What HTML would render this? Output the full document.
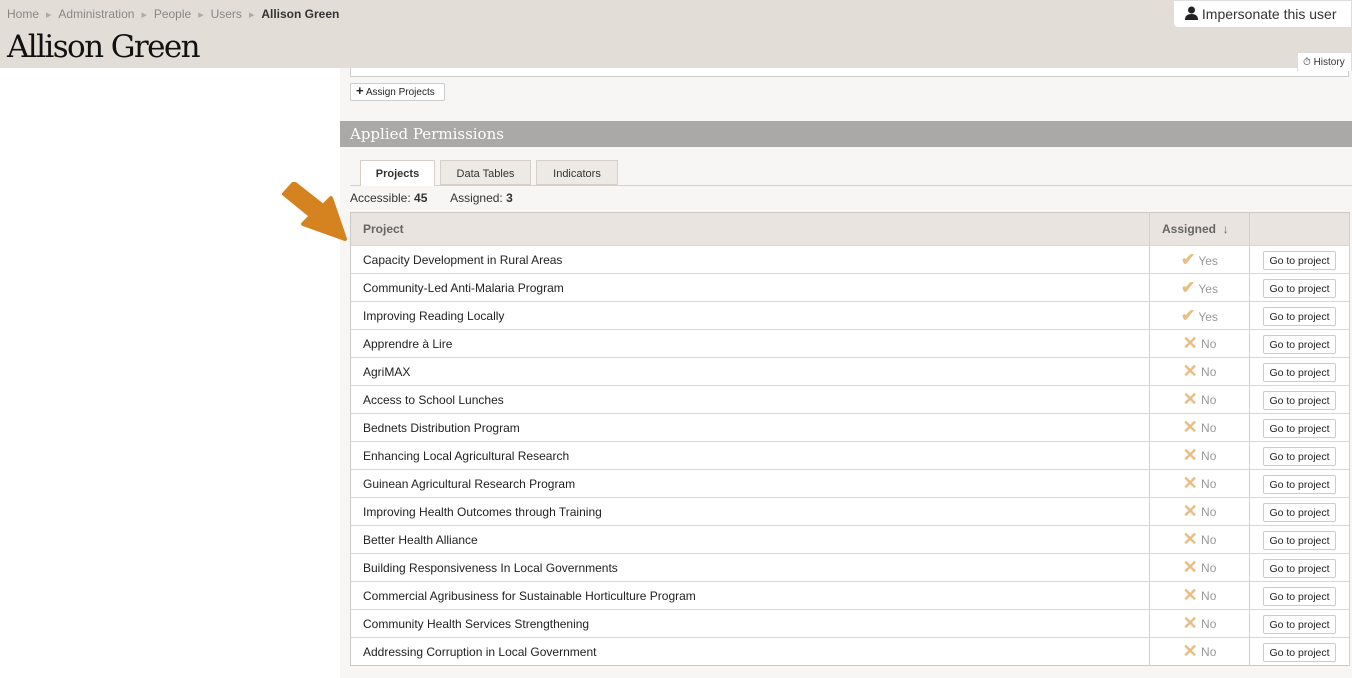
<!DOCTYPE html>
<html><head><meta charset="utf-8"><style>
*{box-sizing:border-box;margin:0;padding:0}
body{width:1352px;height:678px;overflow:hidden;background:#fff;font-family:"Liberation Sans",sans-serif;font-size:12px;color:#222;position:relative}
.hdr{position:absolute;left:0;top:0;width:1352px;height:68px;background:#e3ddd7;z-index:5}
.bc{position:absolute;left:7px;top:7px;font-size:12px;color:#888}
.bc span.s{display:inline-block;margin:0 7px;font-size:7px;color:#aaa;vertical-align:1px}
.bc b{color:#333}
h1{position:absolute;left:7px;top:29px;font-family:"DejaVu Serif","Liberation Serif",serif;font-weight:normal;font-size:31px;letter-spacing:-1.6px;color:#111}
.imp{position:absolute;left:1173px;top:0;width:179px;height:28px;background:#fff;border-radius:0 0 0 5px;border:1px solid #ddd;font-size:14px;color:#333;padding:5px 0 0 11px}
.hist{position:absolute;left:1297px;top:52px;width:55px;height:19px;background:#fff;font-size:10px;color:#333;padding:4px 0 0 5px;z-index:6;border:1px solid #ddd;border-bottom:none}
.main{position:absolute;left:340px;top:60px;width:1012px;height:618px;background:#f7f6f4}
.old{position:absolute;left:350px;top:60px;width:999px;height:17px;border:1px solid #ccc;border-top:none;background:#fff}
.btn{background:#fff;border:1px solid #ccc;border-radius:2px;font-size:10px;color:#222}
.ap{position:absolute;left:340px;top:121px;width:1012px;height:26px;background:#aaa9a7;color:#fff;font-family:"DejaVu Serif",serif;font-size:15px;padding:4px 0 0 10px}
.tabline{position:absolute;left:350px;top:185px;width:1002px;height:1px;background:#d6d0c9}
.tab{position:absolute;top:160px;height:25px;border:1px solid #d6d0c9;background:#ede9e5;font-size:11px;color:#333;text-align:center;padding-top:7px}
.tab.a{background:#fff;font-weight:bold;height:26px;border-bottom:none}
.acc{position:absolute;left:350px;top:191px;font-size:12px;color:#333}
table{position:absolute;left:350px;top:212px;width:1000px;border-collapse:collapse;background:#fff;border:1px solid #c9c9c9}
th{height:33px;background:#e9e4df;text-align:left;font-size:12px;color:#666;padding-left:12px;border-right:1px solid #d6d0c9}
td{height:28px;border-top:1px solid #d8d8d8;font-size:12px;padding-left:12px;border-right:1px solid #d6d0c9}
td.as{text-align:center;padding-left:0;color:#999}
td.b{padding-left:13px}
.g{display:inline-block;width:73px;height:19px;font-size:10.5px;padding-top:3px;text-align:center;margin-top:2px}
.ck{color:#e8bf83;font-size:17px;font-weight:bold}
.x{color:#ebbd84;font-size:18px;font-weight:bold;vertical-align:-1px}
</style></head><body>
<div class="hdr">
<div class="bc">Home<span class="s">▶</span>Administration<span class="s">▶</span>People<span class="s">▶</span>Users<span class="s">▶</span><b>Allison Green</b></div>
<h1>Allison Green</h1>
<div class="imp"><svg width="13" height="14" viewBox="0 0 13 14" style="vertical-align:-1px"><circle cx="6.5" cy="4" r="3.5" fill="#222"/><path d="M0 14 Q0 8 6.5 8 Q13 8 13 14Z" fill="#222"/></svg> Impersonate this user</div>
</div>
<div class="hist">⏱ History</div>
<div class="main"></div>
<div class="old"></div>
<div class="btn" style="position:absolute;left:350px;top:83px;width:95px;height:18px;padding:2px 0 0 5px"><b style="font-size:13px;line-height:10px">+</b> Assign Projects</div>
<div class="ap">Applied Permissions</div>
<div class="tabline"></div>
<div class="tab a" style="left:360px;width:75px">Projects</div>
<div class="tab" style="left:440px;width:91px">Data Tables</div>
<div class="tab" style="left:536px;width:82px">Indicators</div>
<div class="acc">Accessible: <b>45</b> &nbsp; &nbsp; &nbsp; Assigned: <b>3</b></div>
<svg style="position:absolute;left:275px;top:182px" width="80" height="65" viewBox="0 0 80 65"><path d="M9 12 L36 34 L28 42 L70 57 L56 16 L48 24 L19 1 Z" fill="#d48320" stroke="#d48320" stroke-width="4" stroke-linejoin="round"/></svg>
<table>
<tr><th style="width:799px">Project</th><th style="width:100px">Assigned &nbsp;↓</th><th style="width:100px"></th></tr>
<tr><td>Capacity Development in Rural Areas</td><td class="as"><span class="ck">✔</span> Yes</td><td class="b"><span class="btn g">Go to project</span></td></tr>
<tr><td>Community-Led Anti-Malaria Program</td><td class="as"><span class="ck">✔</span> Yes</td><td class="b"><span class="btn g">Go to project</span></td></tr>
<tr><td>Improving Reading Locally</td><td class="as"><span class="ck">✔</span> Yes</td><td class="b"><span class="btn g">Go to project</span></td></tr>
<tr><td>Apprendre à Lire</td><td class="as"><span class="x">✕</span> No</td><td class="b"><span class="btn g">Go to project</span></td></tr>
<tr><td>AgriMAX</td><td class="as"><span class="x">✕</span> No</td><td class="b"><span class="btn g">Go to project</span></td></tr>
<tr><td>Access to School Lunches</td><td class="as"><span class="x">✕</span> No</td><td class="b"><span class="btn g">Go to project</span></td></tr>
<tr><td>Bednets Distribution Program</td><td class="as"><span class="x">✕</span> No</td><td class="b"><span class="btn g">Go to project</span></td></tr>
<tr><td>Enhancing Local Agricultural Research</td><td class="as"><span class="x">✕</span> No</td><td class="b"><span class="btn g">Go to project</span></td></tr>
<tr><td>Guinean Agricultural Research Program</td><td class="as"><span class="x">✕</span> No</td><td class="b"><span class="btn g">Go to project</span></td></tr>
<tr><td>Improving Health Outcomes through Training</td><td class="as"><span class="x">✕</span> No</td><td class="b"><span class="btn g">Go to project</span></td></tr>
<tr><td>Better Health Alliance</td><td class="as"><span class="x">✕</span> No</td><td class="b"><span class="btn g">Go to project</span></td></tr>
<tr><td>Building Responsiveness In Local Governments</td><td class="as"><span class="x">✕</span> No</td><td class="b"><span class="btn g">Go to project</span></td></tr>
<tr><td>Commercial Agribusiness for Sustainable Horticulture Program</td><td class="as"><span class="x">✕</span> No</td><td class="b"><span class="btn g">Go to project</span></td></tr>
<tr><td>Community Health Services Strengthening</td><td class="as"><span class="x">✕</span> No</td><td class="b"><span class="btn g">Go to project</span></td></tr>
<tr><td>Addressing Corruption in Local Government</td><td class="as"><span class="x">✕</span> No</td><td class="b"><span class="btn g">Go to project</span></td></tr>
</table>
</body></html>
